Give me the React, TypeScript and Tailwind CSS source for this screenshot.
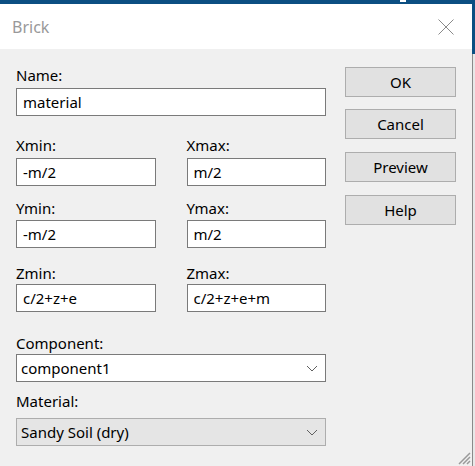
import React from 'react';

const font = { fontFamily: '"Noto Sans", "Open Sans", sans-serif' };

const Label: React.FC<{ children: React.ReactNode }> = ({ children }) => (
    <div className="text-[15px] leading-[20px] text-black">{children}</div>
);

const TextBox: React.FC<{ value: string; className?: string }> = ({ value, className = '' }) => (
    <div className={`h-[28px] bg-white border border-[#7a7a7a] flex items-center pl-[6px] text-[15px] text-black ${className}`}>
        {value}
    </div>
);

const Chevron = () => (
    <svg width="12" height="7" viewBox="0 0 12 7" className="shrink-0">
        <path d="M1 1 L6 6 L11 1" fill="none" stroke="#606060" strokeWidth="1" />
    </svg>
);

const Combo: React.FC<{ value: string; filled?: boolean; className?: string }> = ({ value, filled, className = '' }) => (
    <div
        className={`h-[28px] flex items-center justify-between pl-[4px] pr-[7px] text-[15px] text-black border ${
            filled ? 'bg-[#e5e5e5] border-[#adadad]' : 'bg-white border-[#7a7a7a]'
        } ${className}`}
    >
        <span>{value}</span>
        <Chevron />
    </div>
);

const Button: React.FC<{ children: React.ReactNode; className?: string }> = ({ children, className = '' }) => (
    <div className={`h-[30px] w-[111px] bg-[#e1e1e1] border border-[#adadad] flex items-center justify-center text-[15px] text-black ${className}`}>
        {children}
    </div>
);

const Pair: React.FC<{ a: string; av: string; b: string; bv: string; gap: string; className?: string }> = ({ a, av, b, bv, gap, className = '' }) => (
    <div className={`flex gap-[31px] ${className}`}>
        <div className="w-[140px]">
            <Label>{a}</Label>
            <TextBox value={av} className={gap} />
        </div>
        <div className="w-[140px]">
            <Label>{b}</Label>
            <TextBox value={bv} className={gap} />
        </div>
    </div>
);

export default function App() {
    return (
        <div className="w-[475px] h-[466px] flex flex-col overflow-hidden bg-[#f0f0f0]" style={font}>
            <div className="h-[4px] bg-[#0c4f82] relative shrink-0">
                <div className="absolute left-[400px] top-0 w-[6px] h-[2px] bg-white" />
            </div>
            <div className="flex flex-1">
                <div className="w-[472px] flex flex-col">
                    <div className="h-[45px] bg-white flex items-center justify-between pl-[12px] pr-[18px] shrink-0">
                        <span className="text-[16px] text-[#999999]">Brick</span>
                        <svg width="16" height="16" viewBox="0 0 16 16">
                            <path d="M0.5 0.5 L15.5 15.5 M15.5 0.5 L0.5 15.5" stroke="#8a8a8a" strokeWidth="1" fill="none" />
                        </svg>
                    </div>
                    <div className="flex-1 flex relative">
                        <div className="w-[310px] ml-[16px] pt-[16px]">
                            <Label>Name:</Label>
                            <TextBox value="material" className="mt-[3px]" />
                            <Pair a="Xmin:" av="-m/2" b="Xmax:" bv="m/2" gap="mt-[3px]" className="mt-[19px]" />
                            <Pair a="Ymin:" av="-m/2" b="Ymax:" bv="m/2" gap="mt-[2px]" className="mt-[12px]" />
                            <Pair a="Zmin:" av="c/2+z+e" b="Zmax:" bv="c/2+z+e+m" gap="mt-[1px]" className="mt-[15px]" />
                            <div className="mt-[21px]">
                                <Label>Component:</Label>
                                <Combo value="component1" className="mt-[1px]" />
                            </div>
                            <div className="mt-[9px]">
                                <Label>Material:</Label>
                                <Combo value="Sandy Soil (dry)" filled className="mt-[7px]" />
                            </div>
                        </div>
                        <div className="ml-[19px] pt-[18px] flex flex-col gap-[12px]">
                            <Button>OK</Button>
                            <Button>Cancel</Button>
                            <Button className="mt-[1px]">Preview</Button>
                            <Button className="mt-[1px]">Help</Button>
                        </div>
                        <svg width="14" height="14" viewBox="0 0 14 14" className="absolute right-[1px] bottom-[1px]">
                            <path d="M13 2 L2 13 M13 6 L6 13 M13 10 L10 13" stroke="#9a9a9a" strokeWidth="1.5" fill="none" />
                        </svg>
                    </div>
                </div>
                <div className="w-[3px] flex flex-col">
                    <div className="h-[50px] bg-[#0c4f82]" />
                    <div className="flex-1 border-l border-[#8a8a8a] bg-[#e8e8e8]" />
                </div>
            </div>
        </div>
    );
}
